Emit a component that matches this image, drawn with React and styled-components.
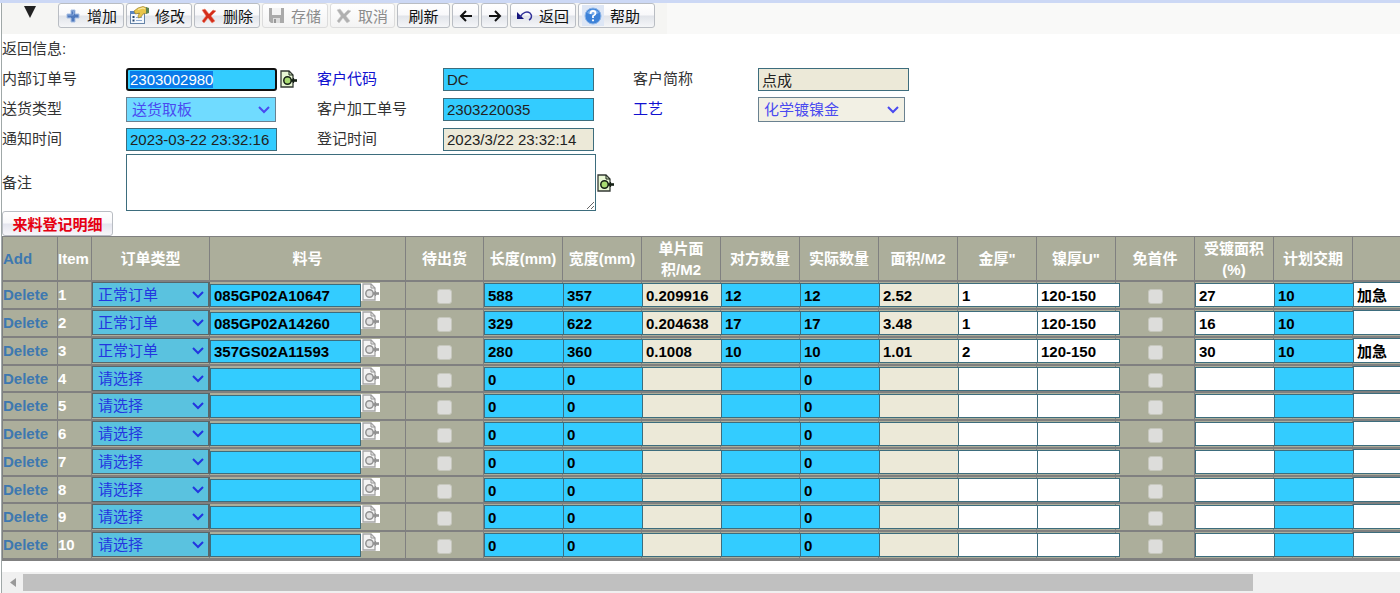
import React, { useEffect, useRef } from "react";
import styled, { createGlobalStyle } from "styled-components";

const GlobalStyle = createGlobalStyle`
  * {
    box-sizing: border-box;
  }

  body {
    margin: 0;
    background: #fff;
    overflow: hidden;
  }

  body, button, input, select, textarea {
    font-family: "Liberation Sans", "Noto Sans CJK SC", sans-serif;
    font-size: 15px;
  }
`;

const Page = styled.div`
  color: #333;
  border-top: 3px solid #ccd8f5;
`;

const Content = styled.div`
  margin-left: 1px;
  border-left: 1px solid #a0a8a8;
`;

const Toolbar = styled.div`
  display: flex;
  align-items: flex-start;
  gap: 2px;
  height: 31px;
  background: linear-gradient(90deg, #f5f5f3 665px, #f9f9f8 665px);
`;

const MenuArrow = styled.button`
  width: 54px;
  height: 24px;
  padding: 3px 0 0 22px;
  border: 0;
  background: none;
  display: flex;
`;

const ToolButton = styled.button`
  display: flex;
  align-items: center;
  justify-content: ${(p) => (p.$center ? "center" : "flex-end")};
  gap: 6px;
  width: ${(p) => p.$width || 66}px;
  height: 25px;
  padding: 0 ${(p) => (p.$center ? 0 : p.$end || 6)}px 0 0;
  border: 1px solid #b9bdc3;
  border-radius: 3px;
  background: linear-gradient(#fff 0%, #f8f8fa 48%, #e1e4ea 52%, #f5f6f8 100%);
  color: #111;
  white-space: nowrap;

  &:disabled {
    color: #8c8c8c;
    border-color: #dcdcdc;
    background: linear-gradient(#fff, #f3f3f3);
  }
`;

const HelpIconBox = styled.span`
  display: flex;
  justify-content: center;
  width: 22px;
  height: 21px;
  align-items: center;
  background: #dde6f5;
`;

const Message = styled.div`
  height: 30px;
  line-height: 30px;
`;

const Form = styled.form`
  display: grid;
  grid-template-columns: 124px 191px 126px 190px 125px 1fr;
  grid-template-rows: 30px 30px 30px 57px;
  align-items: center;
`;

const Label = styled.label`
  line-height: 22px;
  color: ${(p) => (p.$link ? "#1010d0" : "#333")};
`;

const Field = styled.div`
  display: flex;
  align-items: center;
  gap: ${(p) => (p.$wide ? 0 : 2)}px;
  grid-column: ${(p) => (p.$wide ? "2 / -1" : "auto")};
`;

const tones = { blue: "#33ccff", beige: "#ece9d8", white: "#fff" };

const TextInput = styled.input`
  width: 151px;
  height: 23px;
  padding: 0 3px;
  border: 1px solid #3d6d7d;
  border-radius: 0;
  background: ${(p) => tones[p.$tone]};
  color: #222;
  outline: none;

  &::selection {
    background: #0a7bea;
    color: #fff;
  }

  &:focus {
    padding: 0 2px;
    border: 2px solid #101010;
    border-radius: 3px;
  }
`;

const Remark = styled.textarea`
  display: block;
  width: 470px;
  height: 57px;
  border: 1px solid #3d6d7d;
  outline: none;
  resize: both;
`;

const IconButton = styled.button`
  display: flex;
  padding: 0;
  border: 0;
  background: ${(p) => (p.disabled ? "#fff" : "none")};
`;

const SelectBox = styled.div`
  position: relative;
  width: ${(p) => p.$width}px;
  height: 25px;

  svg {
    position: absolute;
    right: 5px;
    top: 8px;
    pointer-events: none;
  }
`;

const Select = styled.select`
  appearance: none;
  display: block;
  width: 100%;
  height: 25px;
  padding: 0 5px;
  border: ${(p) => (p.$cell ? "2px solid #58676a" : "1px solid #6a8190")};
  border-width: ${(p) => (p.$cell ? "1px 2px 1px 1px" : "1px")};
  border-radius: 0;
  background: ${(p) => (p.$cell ? "#5ac2df" : p.$beige ? "#f2f0e4" : "#70dbff")};
  color: ${(p) => (p.$cell ? "#2336e0" : "#4a4af0")};
`;

const TabButton = styled.button`
  display: block;
  width: 111px;
  height: 25px;
  padding: 0;
  border: 1px solid #b9bdc3;
  border-radius: 3px;
  background: linear-gradient(#fff 0%, #f8f8fa 48%, #e3e5ee 52%, #f8f6fa 100%);
  color: #e60012;
  font-weight: bold;
`;

const TableScroll = styled.div`
  overflow: hidden;
`;

const Table = styled.table`
  table-layout: fixed;
  width: 1570px;
  border-collapse: separate;
  border-spacing: 0;
  border-top: 1px solid #808080;
  border-bottom: 1px solid #808080;
  background: #acae9b;
  font-weight: bold;
`;

const HeadCell = styled.th`
  height: 45px;
  padding: 0;
  border-left: 1px solid #808080;
  border-bottom: 2px solid #808080;
  color: #fff;
  line-height: 21px;
  text-align: ${(p) => (p.$left ? "left" : "center")};
`;

const Row = styled.tr`
  height: 28px;

  &:nth-child(4n) {
    height: 27px;
  }
`;

const Cell = styled.td`
  padding: 0;
  border-left: 1px solid #808080;
  border-bottom: 2px solid #808080;
  color: #fff;
  line-height: 20px;
  vertical-align: ${(p) => (p.$top ? "top" : "middle")};
`;

const ActionLink = styled.a`
  color: #3d78b0;
  text-decoration: none;
`;

const PartField = styled.div`
  display: flex;
  align-items: flex-start;
  padding-top: 1px;
`;

const CellInput = styled.input`
  position: relative;
  display: block;
  width: ${(p) => p.$width || 83}px;
  height: ${(p) => p.$height || 24}px;
  margin-top: ${(p) => (p.$flush ? 0 : 1)}px;
  padding: 0 2px 0 3px;
  border: 1px solid #3d6d7d;
  border-radius: 0;
  background: ${(p) => tones[p.$tone]};
  color: #000;
  font-weight: bold;
  outline: none;
`;

const CheckBox = styled.input`
  appearance: none;
  display: block;
  width: 15px;
  height: 15px;
  margin: 3px auto 0;
  border: 1px solid #c6c7bd;
  border-radius: 3px;
  background: #dddddb;
`;

const ScrollBar = styled.div`
  display: flex;
  align-items: center;
  margin-top: 11px;
  height: 21px;
  background: #f0f0f0;
`;

const ScrollArrow = styled.button`
  display: flex;
  justify-content: center;
  width: 21px;
  padding: 0;
  border: 0;
  background: none;
`;

const ScrollThumb = styled.div`
  width: 88%;
  height: 17px;
  background: #c0c0c0;
`;

const PlusIcon = () => (
  <svg width="16" height="16" viewBox="0 0 16 16">
    <path d="M6 2h4v4h4v4h-4v4H6v-4H2V6h4z" fill="#4f79bd" stroke="#a9c0e4" strokeWidth="1" />
    <path d="M7 3h1.500v4H3" fill="none" stroke="#86a8dc" />
  </svg>
);

const EditIcon = () => (
  <svg width="20" height="19" viewBox="0 0 20 19">
    <rect x="1.500" y="5.500" width="14" height="12" fill="#f4f8fd" stroke="#6684a8" />
    <path d="M1 5h15v3H1z" fill="#5b86c2" />
    <path d="M3.500 10h2v2h-2zM3.500 13.500h2v2h-2z" fill="#26466f" />
    <path d="M7 11.500h6M7 14.500h6" stroke="#8daad0" />
    <path d="M5 5l4-3 5-1.500 4 1.500v5l-4 1-2 3-2.500 1-.5-2 1.500-3-4 1z" fill="#e8c54a" stroke="#9e832b" strokeWidth=".7" />
    <path d="M9 3.500l5-1.500 2 1" fill="none" stroke="#f8e9a0" strokeWidth="1.200" />
    <path d="M17 1l3 1v5l-3 1z" fill="#5f8350" />
  </svg>
);

const CrossIcon = ({ gray }) => (
  <svg width="16" height="16" viewBox="0 0 16 16">
    <path
      d="M1 2l3-1 4 5 4-4 3 1-5 5 4 5-3 2-4-5-4 5-2-2 4-5z"
      fill={gray ? "#b0b0b0" : "#d42d1b"}
      stroke={gray ? "#ccc" : "#ed8b72"}
      strokeWidth=".6"
    />
  </svg>
);

const SaveIcon = () => (
  <svg width="17" height="17" viewBox="0 0 17 17">
    <path d="M1 1h15v15H3l-2-2z" fill="#aaa" />
    <path d="M4 1h9v7H4z" fill="#f4f4f4" />
    <path d="M5 11h7v5H5z" fill="#ddd" />
    <path d="M6 12h2v4H6z" fill="#999" />
  </svg>
);

const ArrowIcon = ({ right }) => (
  <svg width="14" height="12" viewBox="0 0 14 12">
    <path
      d={right ? "M1 6h11M7 1l5 5-5 5" : "M13 6H2M7 1L2 6l5 5"}
      fill="none"
      stroke="#111"
      strokeWidth="2"
    />
  </svg>
);

const UndoIcon = () => (
  <svg width="17" height="14" viewBox="0 0 17 14">
    <path d="M1 3v7h7z" fill="#15157d" />
    <path d="M4 8c3-5 7-6 10-4 3 3 1 6-1 7" fill="none" stroke="#33339a" strokeWidth="1.500" />
  </svg>
);

const HelpIcon = () => (
  <svg width="18" height="18" viewBox="0 0 18 18">
    <circle cx="9" cy="9" r="8" fill="#3d82d8" stroke="#8db5e8" />
    <path d="M3 6a7 7 0 0 1 12 0q-6 3-12 0" fill="#76abea" />
    <path d="M6.500 7q0-3 2.500-3t2.500 2.300Q11.500 8 9 9v2" fill="none" stroke="#fff" strokeWidth="1.800" />
    <circle cx="9" cy="13.300" r="1.100" fill="#fff" />
  </svg>
);

const LookupIcon = ({ gray }) => {
  const ink = gray ? "#929292" : "#152015";
  return (
    <svg width="19" height="18" viewBox="0 0 19 18">
      <path
        d="M2 1h8l4 4v12H2z"
        fill={gray ? "#f4f4f4" : "#e8f7d4"}
        stroke={gray ? "#a5a5a5" : "#343a34"}
        strokeWidth="1.300"
      />
      <path d="M10 1v4h4" fill="none" stroke={ink} />
      <path d="M12 10.500h6" stroke={ink} strokeWidth="2.600" />
      <path d="M14.500 8v5" stroke={ink} strokeWidth="1.200" />
      <circle cx="8.500" cy="10.500" r="3.700" fill={gray ? "#e2e2e2" : "#a9dc72"} stroke={ink} strokeWidth="1.500" />
    </svg>
  );
};

const Chevron = ({ color }) => (
  <svg width="14" height="9" viewBox="0 0 14 9">
    <path d="M2 2l5 5 5-5" fill="none" stroke={color} strokeWidth="2" />
  </svg>
);

const columns = [
  { title: "Add", width: 55 },
  { title: "Item", width: 34 },
  { title: "订单类型", width: 118 },
  { title: "料号", width: 196 },
  { title: "待出货", width: 78 },
  { title: "长度(mm)", width: 79 },
  { title: "宽度(mm)", width: 79 },
  { title: "单片面积/M2", lines: ["单片面", "积/M2"], width: 79 },
  { title: "对方数量", width: 79 },
  { title: "实际数量", width: 79 },
  { title: "面积/M2", width: 79 },
  { title: '金厚"', width: 79 },
  { title: '镍厚U"', width: 79 },
  { title: "免首件", width: 79 },
  { title: "受镀面积(%)", lines: ["受镀面积", "(%)"], width: 79 },
  { title: "计划交期", width: 79 },
  { title: "", width: 220 },
];

const emptyRow = { type: "请选择", part: "", values: ["0", "0", "", "", "0", "", "", ""], rate: "", due: "", note: "" };

const rows = [
  {
    type: "正常订单",
    part: "085GP02A10647",
    values: ["588", "357", "0.209916", "12", "12", "2.52", "1", "120-150"],
    rate: "27",
    due: "10",
    note: "加急",
  },
  {
    type: "正常订单",
    part: "085GP02A14260",
    values: ["329", "622", "0.204638", "17", "17", "3.48", "1", "120-150"],
    rate: "16",
    due: "10",
    note: "",
  },
  {
    type: "正常订单",
    part: "357GS02A11593",
    values: ["280", "360", "0.1008", "10", "10", "1.01", "2", "120-150"],
    rate: "30",
    due: "10",
    note: "加急",
  },
  ...Array(7).fill(emptyRow),
];

const valueTones = ["blue", "blue", "beige", "blue", "blue", "beige", "white", "white"];

const DropDown = ({ id, label, value, width, cell, beige }) => (
  <SelectBox $width={width}>
    <Select id={id} aria-label={label} defaultValue={value} $cell={cell} $beige={beige}>
      <option>{value}</option>
    </Select>
    <Chevron color={cell ? "#2336e0" : "#4a4af0"} />
  </SelectBox>
);

const OrderRow = ({ row, index }) => (
  <Row>
    <Cell>
      <ActionLink href="#delete">Delete</ActionLink>
    </Cell>
    <Cell>{index}</Cell>
    <Cell $top>
      <DropDown label={`订单类型 ${index}`} value={row.type} width={118} cell />
    </Cell>
    <Cell $top>
      <PartField>
        <CellInput aria-label={`料号 ${index}`} defaultValue={row.part} $tone="blue" $width={151} $height={23} />
        <IconButton type="button" disabled aria-label="查找料号">
          <LookupIcon gray />
        </IconButton>
      </PartField>
    </Cell>
    <Cell>
      <CheckBox type="checkbox" disabled aria-label={`待出货 ${index}`} />
    </Cell>
    {row.values.map((value, i) => (
      <Cell $top key={i}>
        <CellInput aria-label={`${columns[i + 5].title} ${index}`} defaultValue={value} $tone={valueTones[i]} />
      </Cell>
    ))}
    <Cell>
      <CheckBox type="checkbox" disabled aria-label={`免首件 ${index}`} />
    </Cell>
    <Cell $top>
      <CellInput aria-label={`受镀面积 ${index}`} defaultValue={row.rate} $tone="white" />
    </Cell>
    <Cell $top>
      <CellInput aria-label={`计划交期 ${index}`} defaultValue={row.due} $tone="blue" />
    </Cell>
    <Cell $top>
      <CellInput
        aria-label={`备注 ${index}`}
        defaultValue={row.note}
        $tone="white"
        $width={219}
        $height={25}
        $flush
      />
    </Cell>
  </Row>
);

const App = () => {
  const orderNo = useRef();

  useEffect(() => {
    orderNo.current.focus();
    orderNo.current.select();
  }, []);

  return (
    <Page>
      <GlobalStyle />
      <Content>
        <Toolbar>
          <MenuArrow aria-label="菜单">
            <svg width="12" height="12" viewBox="0 0 12 12">
              <path d="M0 0h12L6 12z" fill="#222" />
            </svg>
          </MenuArrow>
          <ToolButton><PlusIcon />增加</ToolButton>
          <ToolButton><EditIcon />修改</ToolButton>
          <ToolButton><CrossIcon />删除</ToolButton>
          <ToolButton disabled><SaveIcon />存储</ToolButton>
          <ToolButton disabled $width={65}><CrossIcon gray />取消</ToolButton>
          <ToolButton $center $width={53}>刷新</ToolButton>
          <ToolButton $center $width={27} aria-label="上一条"><ArrowIcon /></ToolButton>
          <ToolButton $center $width={27} aria-label="下一条"><ArrowIcon right /></ToolButton>
          <ToolButton><UndoIcon />返回</ToolButton>
          <ToolButton $width={77} $end={14}>
            <HelpIconBox><HelpIcon /></HelpIconBox>
            帮助
          </ToolButton>
        </Toolbar>

        <Message>返回信息:</Message>

        <Form>
          <Label htmlFor="orderNo">内部订单号</Label>
          <Field>
            <TextInput id="orderNo" ref={orderNo} defaultValue="2303002980" $tone="blue" />
            <IconButton type="button" aria-label="查找订单"><LookupIcon /></IconButton>
          </Field>
          <Label htmlFor="customer" $link>客户代码</Label>
          <TextInput id="customer" defaultValue="DC" $tone="blue" />
          <Label htmlFor="shortName">客户简称</Label>
          <TextInput id="shortName" defaultValue="点成" readOnly $tone="beige" />

          <Label htmlFor="delivery">送货类型</Label>
          <DropDown id="delivery" value="送货取板" width={150} />
          <Label htmlFor="workNo">客户加工单号</Label>
          <TextInput id="workNo" defaultValue="2303220035" $tone="blue" />
          <Label htmlFor="craft" $link>工艺</Label>
          <DropDown id="craft" value="化学镀镍金" width={147} beige />

          <Label htmlFor="noticeTime">通知时间</Label>
          <TextInput id="noticeTime" defaultValue="2023-03-22 23:32:16" $tone="blue" />
          <Label htmlFor="recordTime">登记时间</Label>
          <TextInput id="recordTime" defaultValue="2023/3/22 23:32:14" readOnly $tone="beige" />
          <span />
          <span />

          <Label htmlFor="remark">备注</Label>
          <Field $wide>
            <Remark id="remark" />
            <IconButton type="button" aria-label="查找备注"><LookupIcon /></IconButton>
          </Field>
        </Form>

        <TabButton>来料登记明细</TabButton>

        <TableScroll>
          <Table>
            <colgroup>
              {columns.map((c, i) => (
                <col key={i} width={c.width} />
              ))}
            </colgroup>
            <thead>
              <tr>
                {columns.map((c, i) => (
                  <HeadCell key={i} $left={i < 2}>
                    {i === 0 && <ActionLink href="#add">{c.title}</ActionLink>}
                    {i > 0 && !c.lines && c.title}
                    {c.lines && c.lines.map((line) => <div key={line}>{line}</div>)}
                  </HeadCell>
                ))}
              </tr>
            </thead>
            <tbody>
              {rows.map((row, i) => (
                <OrderRow key={i} row={row} index={i + 1} />
              ))}
            </tbody>
          </Table>
        </TableScroll>

        <ScrollBar>
          <ScrollArrow aria-label="向左滚动">
            <svg width="6" height="9" viewBox="0 0 6 9">
              <path d="M6 0v9L0 4.500z" fill="#999" />
            </svg>
          </ScrollArrow>
          <ScrollThumb />
        </ScrollBar>
      </Content>
    </Page>
  );
};

export default App;
